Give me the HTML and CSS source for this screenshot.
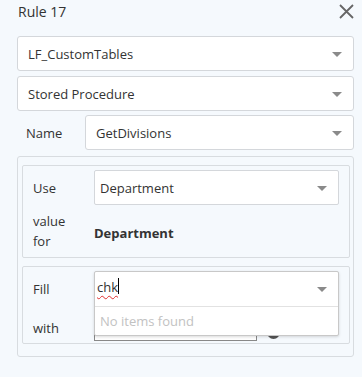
FILE: index.html
```html
<!DOCTYPE html>
<html>
<head>
<meta charset="utf-8">
<link rel="stylesheet" href="styles.css">
</head>
<body>
<div class="dialog">
  <div class="header">
    <span class="title">Rule 17</span>
    <svg class="close" width="15" height="15" viewBox="0 0 15 15"><path d="M1 1L14 14M14 1L1 14" stroke="#666" stroke-width="1.8" fill="none"/></svg>
  </div>
  <div class="select full"><span>LF_CustomTables</span><i class="caret"></i></div>
  <div class="select full second"><span>Stored Procedure</span><i class="caret"></i></div>
  <div class="row name-row">
    <label class="lbl name-lbl">Name</label>
    <div class="select grow"><span>GetDivisions</span><i class="caret"></i></div>
  </div>
  <div class="panel">
    <div class="inner">
      <div class="row">
        <label class="lbl">Use</label>
        <div class="select grow tight"><span>Department</span><i class="caret"></i></div>
      </div>
      <div class="row value-row">
        <label class="lbl two">value<br>for</label>
        <b class="field">Department</b>
      </div>
    </div>
    <div class="inner second-inner">
      <div class="row fill-row">
        <label class="lbl">Fill</label>
      </div>
      <div class="row with-row">
        <label class="lbl">with</label>
        <div class="under-input"></div>
        <span class="help"></span>
      </div>
      <div class="dropdown">
        <div class="search"><span class="typed">chk</span><span class="cursor"></span><i class="caret"></i></div>
        <div class="empty">No items found</div>
      </div>
    </div>
  </div>
</div>
</body>
</html>
```
FILE: styles.css
```css
html, body { margin: 0; padding: 0; }
body {
  background: #f5f9fd;
  font-family: "Open Sans", "Noto Sans", sans-serif;
  font-size: 13px;
  color: #333;
  width: 362px;
  height: 377px;
  overflow: hidden;
}
.dialog { padding: 0 8px 0 17px; }
.header {
  height: 36px;
  display: flex;
  align-items: center;
  justify-content: space-between;
  padding-left: 1px;
  margin-top: -7px;
}
.title { font-size: 14px; color: #333; margin-top: 1px; }
.close { margin-right: 0; margin-top: 1px; }
.select {
  position: relative;
  height: 33px;
  background: #fff;
  border: 1px solid #d4d7db;
  border-radius: 3px;
  display: flex;
  align-items: center;
  padding-left: 10px;
  box-sizing: content-box;
}
.select.tight { border-radius: 2px; padding-left: 5px; }
.caret {
  position: absolute;
  right: 11px;
  top: 50%;
  margin-top: -2px;
  width: 0; height: 0;
  border-left: 5px solid transparent;
  border-right: 5px solid transparent;
  border-top: 5px solid #8a8a8a;
}
.full { margin-top: 7px; }
.full.second { margin-top: 5px; }
.row { display: flex; align-items: center; }
.name-row { margin-top: 4px; }
.lbl { width: 68px; flex: none; padding-left: 9px; box-sizing: border-box; color: #333; }
.grow { flex: 1; }
.panel {
  margin-top: 6px;
  border: 1px solid #d8dce0;
  border-radius: 3px;
  padding: 8px 3px 8px 4px;
  height: 183px;
}
.inner {
  border: 1px solid #d8dce0;
  border-radius: 2px;
  padding: 4px 10px 0 0;
  height: 87px;
  position: relative;
}
.inner .lbl { width: 71px; padding-left: 10px; }
.value-row { margin-top: 6px; }
.lbl.two { line-height: 20px; }
.field { font-weight: bold; margin-top: 4px; }
.second-inner { margin-top: 8px; height: 76px; padding-top: 0; }
.fill-row { height: 43px; padding-top: 0; }
.with-row { height: 36px; }
.under-input {
  width: 161px;
  height: 22px;
  border: 1px solid #888;
  margin-top: 2px;
  background: #fff;
}
.help {
  width: 13px; height: 13px;
  border-radius: 50%;
  background: #555;
  margin-left: 10px;
  margin-top: 8px;
}
.dropdown {
  position: absolute;
  left: 71px;
  top: 4px;
  width: 243px;
  background: #fff;
  border: 1px solid #c8c8c8;
  border-radius: 2px;
  box-shadow: 0 1px 3px rgba(0,0,0,0.15);
}
.search {
  position: relative;
  height: 34px;
  display: flex;
  align-items: center;
  padding-left: 2px;
  border-bottom: 1px solid #e2e2e2;
}
.typed {
  text-decoration: underline wavy #e03030;
  text-decoration-thickness: 1px;
  text-underline-offset: 3px;
  color: #333;
  margin-top: -4px;
}
.cursor {
  display: inline-block;
  width: 1px;
  height: 16px;
  background: #000;
  margin-top: -6px;
}
.empty {
  height: 28px;
  line-height: 28px;
  padding-left: 5px;
  color: #c2c2c2;
}
```
